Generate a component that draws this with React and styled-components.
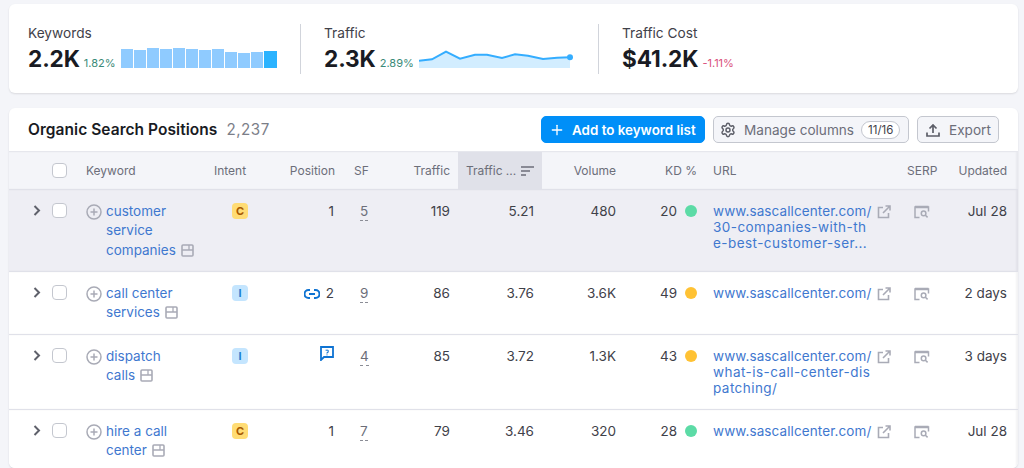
import styled, { createGlobalStyle } from "styled-components"
import { Plus, Settings } from "lucide-react"

const Global = createGlobalStyle`
  html, body { margin: 0; padding: 0; background: #f4f5f9; }
  body { font-family: Inter, "Liberation Sans", sans-serif; color: #191b23; }
`
const Page = styled.div`
  height: 468px;
  box-sizing: border-box;
  overflow: hidden;
  padding: 4px 6px 0 9px;
`
const Card = styled.section`
  background: #fff;
  border-radius: 6px;
  box-shadow: 0 1px 2px rgba(25, 27, 35, .12);
`
const Summary = styled(Card)`
  height: 89px;
  display: flex;
  align-items: center;
  padding: 0 19px;
  box-sizing: border-box;
  margin-bottom: 15px;
`
const Metric = styled.div`
  width: ${p => p.$w}px;
  height: 50px;
  box-sizing: border-box;
  border-right: ${p => p.$last ? "none" : "1px solid #d1d4db"};
  padding-left: ${p => p.$first ? 0 : 23}px;
`
const MetricLabel = styled.div`
  font-size: 13.7px;
  line-height: 16px;
  margin-top: 1px;
  color: #3f4149;
`
const MetricRow = styled.div`
  display: flex;
  align-items: flex-end;
  height: 26px;
  margin-top: 5px;
`
const MetricValue = styled.span`
  font-size: 22.6px;
  line-height: 26px;
  font-weight: 700;
  letter-spacing: -.1px;
`
const Delta = styled.span`
  font-size: 11px;
  line-height: 14px;
  margin: 0 5px 2px 4px;
  color: ${p => p.$down ? "#d9527c" : "#3a8a78"};
`
const Bars = styled.div`
  display: flex;
  align-items: flex-end;
  gap: 1px;
  width: 156px;
  height: 20px;
  margin-bottom: 4px;
`
const Bar = styled.i`
  display: block;
  flex: 1;
  background: ${p => p.$active ? "#2bb3ff" : "#8fcbff"};
`
const Spark = styled.svg`
  display: block;
  margin-bottom: 4px;
`
const Table = styled(Card)`
  height: 360px;
  overflow: hidden;
`
const TableBar = styled.div`
  height: 43px;
  display: flex;
  align-items: center;
  padding: 0 19px;
`
const Title = styled.h2`
  margin: 0;
  font-size: 15.5px;
  font-weight: 600;
  letter-spacing: .05px;
`
const Count = styled.span`
  font-size: 15.2px;
  color: #7b7e88;
  margin-left: 9px;
  letter-spacing: .5px;
`
const Actions = styled.div`
  margin-left: auto;
  display: flex;
  gap: 8px;
`
const Btn = styled.button`
  width: ${p => p.$w}px;
  height: 27px;
  box-sizing: border-box;
  display: flex;
  align-items: center;
  white-space: nowrap;
  font: inherit;
  font-size: 13.6px;
  border-radius: 5px;
  padding: 0 ${p => p.$px || 8}px;
  gap: ${p => p.$gap || 8}px;
  background: #f4f5f9;
  color: #6c6e79;
  border: 1px solid #c4c7cf;
  & > svg { flex: none; }
`
const PrimaryBtn = styled(Btn)`
  background: #008ff8;
  border-color: #008ff8;
  color: #fff;
  font-size: 13.4px;
  font-weight: 600;
`
const Pill = styled.span`
  font-size: 11.5px;
  height: 18px;
  line-height: 16px;
  box-sizing: border-box;
  padding: 0 6px;
  margin-left: -1px;
  background: #fff;
  border: 1px solid #c4c7cf;
  border-radius: 9px;
  color: #3f4149;
`
const Grid = styled.div`
  display: grid;
  grid-template-columns: 35px 34px 128px 77px 63px 55px 57px 84px 82px 81px 194px 51px 68px;
  box-shadow: inset -2px 0 2px rgba(25, 27, 35, .05);
`
const HeadRow = styled(Grid)`
  height: 39px;
  background: #f4f5f9;
  border-top: 1px solid #e6e7ed;
  border-bottom: 1px solid #e0e1e9;
  box-sizing: border-box;
`
const Head = styled.div`
  font-size: 12px;
  color: #6c6e79;
  white-space: nowrap;
  display: flex;
  align-items: center;
  justify-content: ${p => p.$right ? "flex-end" : "flex-start"};
  padding: 0 ${p => p.$pr || 8}px 0 8px;
  min-width: 0;
  background: ${p => p.$sorted ? "#e0e1e9" : "none"};
`
const SortIcon = styled.svg`
  margin-left: 5px;
  flex: none;
`
const Row = styled(Grid)`
  height: ${p => p.$h}px;
  box-sizing: border-box;
  border-bottom: 1px solid #e0e1e9;
  background: ${p => p.$hover ? "#eeeef4" : "#fff"};
`
const Cell = styled.div`
  font-size: 13.5px;
  line-height: 19.5px;
  padding: 11.5px ${p => p.$pr || 8}px 0 8px;
  min-width: 0;
  color: #3f4149;
  text-align: ${p => p.$right ? "right" : "left"};
`
const Chevron = styled.svg`
  display: block;
  margin: 15px 0 0 24px;
  color: #5f616b;
`
const Box = styled.span`
  display: block;
  width: 15px;
  height: 15px;
  margin-top: ${p => p.$head ? 0 : 1.5}px;
  background: #fff;
  border: 1px solid #c4c7cf;
  border-radius: 4px;
  box-sizing: border-box;
`
const KeywordCell = styled(Cell)`
  display: flex;
  gap: 4px;
`
const AddIcon = styled.svg`
  flex: none;
  margin-top: 2px;
`
const KeywordLink = styled.a`
  color: #3f78cf;
`
const FrameIcon = styled.svg`
  margin-left: 5px;
  vertical-align: -2px;
`
const Intent = styled.span`
  display: block;
  width: 16px;
  height: 16px;
  margin: 1.5px 0 0 18px;
  border-radius: 4px;
  font-size: 11px;
  line-height: 16px;
  font-weight: 700;
  text-align: center;
  color: ${p => p.$type === "C" ? "#a75800" : "#1f80d0"};
  background: ${p => p.$type === "C" ? "#ffdc74" : "#c4e5fe"};
`
const PositionCell = styled(Cell)`
  display: flex;
  justify-content: flex-end;
  align-items: flex-start;
  gap: 6px;
  padding-right: 12px;
`
const FeatureNum = styled.span`
  display: inline-block;
  margin-left: 6px;
  line-height: 16px;
  padding-bottom: 1px;
  color: #6c6e79;
  border-bottom: 1px dashed #8b8d96;
`
const KdDot = styled.i`
  display: inline-block;
  width: 12px;
  height: 12px;
  border-radius: 50%;
  margin-left: 8px;
  vertical-align: -1px;
  background: ${p => p.$tone};
`
const UrlLink = styled.a`
  display: block;
  color: #3f78cf;
  word-break: break-all;
  letter-spacing: .45px;
  line-height: 16px;
`
const UrlRow = styled.div`
  display: flex;
  justify-content: space-between;
  margin-bottom: -2px;
  & > a { line-height: 19.5px; letter-spacing: .1px; }
`
const LineIcon = styled.svg`
  flex: none;
  color: #a9abb6;
  margin-top: 3px;
  margin-left: ${p => p.$ml || 0}px;
  display: block;
`

const Frame = () => (
  <FrameIcon width="13" height="13" viewBox="0 0 13 13">
    <rect x="1" y="1" width="11" height="11" rx="1" fill="none" stroke="#a9abb6" strokeWidth="1.6" />
    <path d="M1 6h11M8 1v5" stroke="#a9abb6" strokeWidth="1.3" />
  </FrameIcon>
)
const External = () => (
  <LineIcon width="14" height="14" viewBox="0 0 14 14" fill="none" stroke="currentColor" strokeWidth="1.6">
    <path d="M6 2.5H1.5v10h10V8M6 8l6.5-6.5M8.5 1h4.5v4.5" />
  </LineIcon>
)
const Serp = () => (
  <LineIcon $ml={7} width="16" height="14" viewBox="0 0 16 14" fill="none" stroke="currentColor" strokeWidth="1.5">
    <path d="M5.5 12.5H1V2h13.5v4.5" />
    <path d="M1 2h13.5" strokeWidth="2.6" />
    <circle cx="9.6" cy="8.4" r="2.3" />
    <path d="M11.4 10.2l2.2 2.2" />
  </LineIcon>
)

const barHeights = [18.4, 17.7, 19.4, 18.7, 19.4, 18.7, 17.7, 18.4, 16, 15, 16, 16.7]
const sparkPoints = "0 12.7L13 11.3L27 3.7L41 10.7L56 6.7L68 6.7L83 10L96 6.3L109 7.7L124 11L138 9.7L151 9.3"

const rows = [
  { kw: ["customer", "service", "companies"], intent: "C", pos: "1", sf: "5", traffic: "119", share: "5.21", vol: "480", kd: "20", tone: "#5cdba6", url: ["www.sascallcenter.com/", "30-companies-with-th", "e-best-customer-ser..."], updated: "Jul 28", h: 82, hover: true },
  { kw: ["call center", "services"], intent: "I", feature: "link", pos: "2", sf: "9", traffic: "86", share: "3.76", vol: "3.6K", kd: "49", tone: "#ffc234", url: ["www.sascallcenter.com/"], updated: "2 days", h: 63 },
  { kw: ["dispatch", "calls"], intent: "I", feature: "question", pos: "", sf: "4", traffic: "85", share: "3.72", vol: "1.3K", kd: "43", tone: "#ffc234", url: ["www.sascallcenter.com/", "what-is-call-center-dis", "patching/"], updated: "3 days", h: 75 },
  { kw: ["hire a call", "center"], intent: "C", pos: "1", sf: "7", traffic: "79", share: "3.46", vol: "320", kd: "28", tone: "#5cdba6", url: ["www.sascallcenter.com/"], updated: "Jul 28", h: 70 },
]

export default function App() {
  return (
    <Page>
      <Global />
      <Summary>
        <Metric $first $w={273}>
          <MetricLabel>Keywords</MetricLabel>
          <MetricRow>
            <MetricValue>2.2K</MetricValue>
            <Delta>1.82%</Delta>
            <Bars>{barHeights.map((h, i) => <Bar key={i} $active={i === 11} style={{ height: h }} />)}</Bars>
          </MetricRow>
        </Metric>
        <Metric $w={298}>
          <MetricLabel>Traffic</MetricLabel>
          <MetricRow>
            <MetricValue>2.3K</MetricValue>
            <Delta>2.89%</Delta>
            <Spark width="154" height="20" viewBox="0 0 154 20">
              <path d={`M${sparkPoints}V20H0Z`} fill="#d2edff" />
              <path d={`M${sparkPoints}`} fill="none" stroke="#34adff" strokeWidth="2" />
              <circle cx="151" cy="9.3" r="3" fill="#34adff" />
            </Spark>
          </MetricRow>
        </Metric>
        <Metric $last $w={300}>
          <MetricLabel>Traffic Cost</MetricLabel>
          <MetricRow>
            <MetricValue>$41.2K</MetricValue>
            <Delta $down>-1.11%</Delta>
          </MetricRow>
        </Metric>
      </Summary>
      <Table>
        <TableBar>
          <Title>Organic Search Positions</Title>
          <Count>2,237</Count>
          <Actions>
            <PrimaryBtn $w={164} $px={7} $gap={7}><Plus size={16} strokeWidth={2} />Add to keyword list</PrimaryBtn>
            <Btn $w={196} $px={6}><Settings size={16} color="#5c5e68" strokeWidth={2.2} />Manage columns<Pill>11/16</Pill></Btn>
            <Btn $w={82} $gap={9}>
              <svg width="14" height="14" viewBox="0 0 14 14" fill="none" stroke="#5c5e68" strokeWidth="1.7">
                <path d="M7 10V2M3.5 5.5L7 2l3.5 3.5M1 9.5V13h12V9.5" />
              </svg>
              Export
            </Btn>
          </Actions>
        </TableBar>
        <HeadRow>
          <Head />
          <Head><Box $head /></Head>
          <Head>Keyword</Head>
          <Head>Intent</Head>
          <Head $right $pr={11}>Position</Head>
          <Head>SF</Head>
          <Head $right>Traffic</Head>
          <Head $sorted>
            Traffic ...
            <SortIcon width="13" height="12" viewBox="0 0 13 12" stroke="#6c6e79" strokeWidth="1.4">
              <path d="M0 2h13M0 6h9M0 10h5" />
            </SortIcon>
          </Head>
          <Head $right>Volume</Head>
          <Head $right>KD %</Head>
          <Head>URL</Head>
          <Head>SERP</Head>
          <Head $right $pr={11}>Updated</Head>
        </HeadRow>
        {rows.map(r => (
          <Row key={r.kw[0]} $h={r.h} $hover={r.hover}>
            <div>
              <Chevron width="8" height="11" viewBox="0 0 8 11" fill="none" stroke="currentColor" strokeWidth="2">
                <path d="M1.5 1L6 5.5L1.5 10" />
              </Chevron>
            </div>
            <Cell><Box /></Cell>
            <KeywordCell>
              <AddIcon width="16" height="16" viewBox="0 0 16 16" fill="none" stroke="#a9abb6" strokeWidth="1.5">
                <circle cx="8" cy="8" r="7" />
                <path d="M8 4.5v7M4.5 8h7" />
              </AddIcon>
              <KeywordLink>
                {r.kw.map((w, i) => (
                  <div key={w}>{w}{i === r.kw.length - 1 && <Frame />}</div>
                ))}
              </KeywordLink>
            </KeywordCell>
            <Cell><Intent $type={r.intent}>{r.intent}</Intent></Cell>
            <PositionCell>
              {r.feature === "link" && (
                <svg width="16" height="12" viewBox="0 0 16 12" fill="none" stroke="#0f73d2" strokeWidth="2" style={{ marginTop: 4 }}>
                  <path d="M6 2H4.5a4 4 0 0 0 0 8H6M10 2h1.5a4 4 0 0 1 0 8H10M5 6h6" />
                </svg>
              )}
              {r.feature === "question" && (
                <svg width="14" height="15" viewBox="0 0 14 15" style={{ marginTop: -1 }}>
                  <path d="M1 1h12v10H4l-3 3z" fill="none" stroke="#0f73d2" strokeWidth="1.8" />
                  <path d="M5.6 4.2h2.6v2.2H7v1.2M7 8.4v1" fill="none" stroke="#0f73d2" strokeWidth="1" />
                </svg>
              )}
              {r.pos}
            </PositionCell>
            <Cell><FeatureNum>{r.sf}</FeatureNum></Cell>
            <Cell $right>{r.traffic}</Cell>
            <Cell $right>{r.share}</Cell>
            <Cell $right>{r.vol}</Cell>
            <Cell $right>{r.kd}<KdDot $tone={r.tone} /></Cell>
            <Cell>
              {r.url.map((u, i) => i === 0
                ? <UrlRow key={u}><UrlLink>{u}</UrlLink><External /></UrlRow>
                : <UrlLink key={u}>{u}</UrlLink>)}
            </Cell>
            <Cell><Serp /></Cell>
            <Cell $right $pr={11}>{r.updated}</Cell>
          </Row>
        ))}
      </Table>
    </Page>
  )
}
